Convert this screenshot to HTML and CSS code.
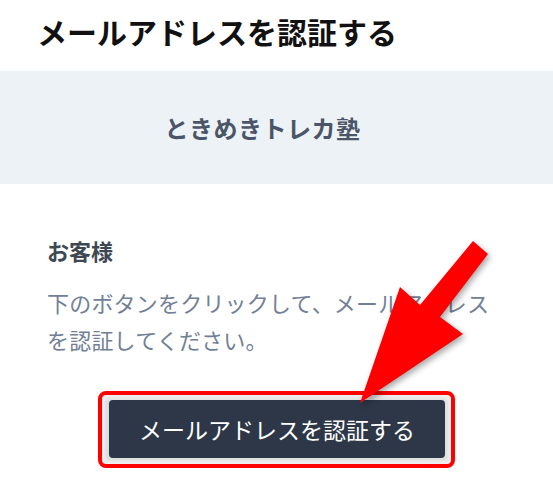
FILE: index.html
```html
<!DOCTYPE html>
<html lang="ja">
<head>
<meta charset="utf-8">
<link rel="stylesheet" href="styles.css">
</head>
<body>
<div class="page">
  <header class="top">
    <h1 class="title">メールアドレスを認証する</h1>
  </header>
  <div class="band">
    <div class="brand">ときめきトレカ塾</div>
  </div>
  <main class="card">
    <h2 class="greet">お客様</h2>
    <p class="msg">下のボタンをクリックして、メールアドレスを認証してください。</p>
    <div class="btn-row">
      <div class="highlight">
        <button class="btn">メールアドレスを認証する</button>
      </div>
    </div>
  </main>
  <svg class="arrow" width="553" height="481" viewBox="0 0 553 481">
    <polygon points="360,403 400,287 420,305 473,241 488,254 440,317 463,334" fill="#ff0000"/>
  </svg>
</div>
</body>
</html>
```
FILE: styles.css
```css
* { box-sizing: border-box; }
html, body { margin: 0; padding: 0; background: #ffffff; }
body {
  font-family: "Noto Sans CJK JP", "Noto Sans", sans-serif;
  width: 553px;
  height: 481px;
  overflow: hidden;
}
.page { position: relative; width: 553px; height: 481px; }
.top { height: 71px; padding: 11px 0 0 37px; }
.title {
  margin: 0;
  font-size: 30px;
  line-height: 40px;
  font-weight: 700;
  color: #111111;
}
.band {
  height: 113px;
  background: #edf2f7;
  display: flex;
  align-items: center;
  justify-content: center;
  padding-right: 28px;
}
.brand {
  font-size: 24px;
  font-weight: 700;
  color: #4a5568;
  letter-spacing: 0.5px;
}
.card {
  background: #ffffff;
  border-radius: 5px 5px 0 0;
  padding: 51px 47px 0 47px;
}
.greet {
  margin: 0;
  font-size: 22px;
  line-height: 30px;
  font-weight: 700;
  color: #3d4852;
}
.msg {
  margin: 19px 0 0 0;
  font-size: 22px;
  line-height: 37px;
  letter-spacing: 0.2px;
  color: #718096;
}
.btn-row {
  margin-top: 33px;
  display: flex;
  justify-content: center;
}
.highlight {
  border: 4px solid #ff0000;
  border-radius: 8px;
  padding: 5px 6px 6px 7px;
  background: #dcdcdc;
  box-shadow: inset 0 0 4px 3px #f2f2f2;
}
.btn {
  display: block;
  width: 336px;
  height: 58px;
  border: none;
  border-radius: 4px;
  background: #2d3748;
  color: #ffffff;
  font-family: "Noto Sans CJK JP", "Noto Sans", sans-serif;
  font-size: 23px;
  padding: 0;
}
.arrow {
  position: absolute;
  left: 0;
  top: 0;
  filter: drop-shadow(2px 3px 3px rgba(0,0,0,0.35));
}
```
